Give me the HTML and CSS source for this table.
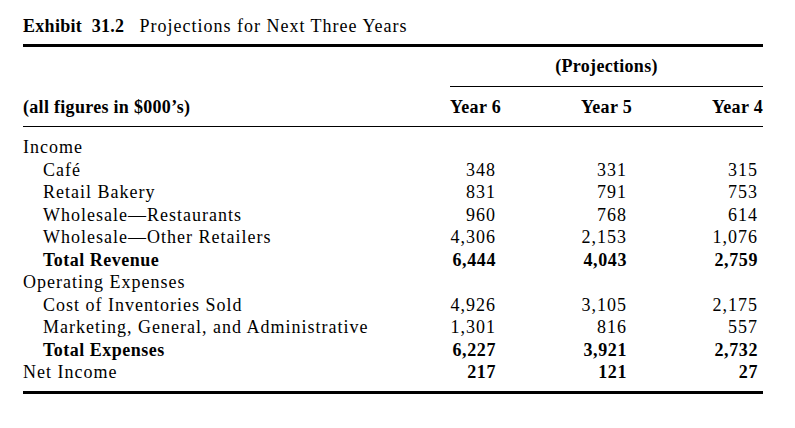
FILE: index.html
```html
<!DOCTYPE html>
<html lang="en">
<head>
<meta charset="utf-8">
<title>Exhibit 31.2</title>
<link rel="stylesheet" href="styles.css">
</head>
<body>
<div class="exhibit">
  <h1 class="title"><span class="num">Exhibit&nbsp; 31.2</span><span class="caption">Projections for Next Three Years</span></h1>
  <table class="fin">
    <colgroup>
      <col class="c-label">
      <col class="c-val">
      <col class="c-val">
      <col class="c-val">
    </colgroup>
    <thead>
      <tr class="proj-row">
        <th></th>
        <th colspan="3" class="proj"><div class="proj-inner">(Projections)</div></th>
      </tr>
      <tr class="head-row">
        <th class="label">(all figures in $000’s)</th>
        <th class="year year6">Year 6</th>
        <th class="year">Year 5</th>
        <th class="year">Year 4</th>
      </tr>
    </thead>
    <tbody>
      <tr class="first"><td class="label">Income</td><td></td><td></td><td></td></tr>
      <tr><td class="label sub">Café</td><td>348</td><td>331</td><td>315</td></tr>
      <tr><td class="label sub">Retail Bakery</td><td>831</td><td>791</td><td>753</td></tr>
      <tr><td class="label sub">Wholesale—Restaurants</td><td>960</td><td>768</td><td>614</td></tr>
      <tr><td class="label sub">Wholesale—Other Retailers</td><td>4,306</td><td>2,153</td><td>1,076</td></tr>
      <tr class="total"><td class="label sub">Total Revenue</td><td>6,444</td><td>4,043</td><td>2,759</td></tr>
      <tr><td class="label">Operating Expenses</td><td></td><td></td><td></td></tr>
      <tr><td class="label sub">Cost of Inventories Sold</td><td>4,926</td><td>3,105</td><td>2,175</td></tr>
      <tr><td class="label sub">Marketing, General, and Administrative</td><td>1,301</td><td>816</td><td>557</td></tr>
      <tr class="total"><td class="label sub">Total Expenses</td><td>6,227</td><td>3,921</td><td>2,732</td></tr>
      <tr class="total last"><td class="label net">Net Income</td><td>217</td><td>121</td><td>27</td></tr>
    </tbody>
  </table>
</div>
</body>
</html>
```
FILE: styles.css
```css
html, body {
  margin: 0;
  padding: 0;
  background: #ffffff;
}

body {
  font-family: "Liberation Serif", "Times New Roman", serif;
  font-size: 18px;
  color: #000000;
  letter-spacing: 1px;
}

.exhibit {
  width: 740px;
  padding: 15px 0 0 23px;
}

.title {
  margin: 0;
  font-size: 18px;
  font-weight: normal;
  line-height: 22px;
  padding-bottom: 7px;
  border-bottom: 3px solid #000;
  display: flex;
  gap: 15px;
}

.title .num {
  font-weight: bold;
  letter-spacing: 0.3px;
}

.fin {
  width: 740px;
  border-collapse: collapse;
  table-layout: fixed;
  line-height: 22.5px;
}

.c-label { width: 347px; }
.c-val { width: 131px; }

.fin th,
.fin td {
  padding: 0;
  text-align: right;
  white-space: nowrap;
}

.fin td {
  padding-right: 5px;
}

.fin th {
  font-weight: bold;
  letter-spacing: 0.3px;
}

.proj-row th {
  padding-top: 8px;
}

.proj-inner {
  margin-left: 80px;
  text-align: center;
  border-bottom: 1px solid #000;
  padding-bottom: 8px;
  line-height: 23px;
  font-weight: bold;
}

.head-row th {
  padding-top: 9px;
  padding-bottom: 8px;
  line-height: 22px;
  border-bottom: 1px solid #000;
}

.fin th.label,
.fin td.label {
  text-align: left;
  padding-right: 0;
}

.fin td.sub {
  padding-left: 20px;
}

.total td {
  font-weight: bold;
  letter-spacing: 0.6px;
}

.total td.sub {
  letter-spacing: 0.5px;
}

.total td.net {
  font-weight: normal;
  letter-spacing: 1px;
}

.first td {
  padding-top: 9px;
}

.last td {
  padding-bottom: 7px;
  border-bottom: 3px solid #000;
}
```
